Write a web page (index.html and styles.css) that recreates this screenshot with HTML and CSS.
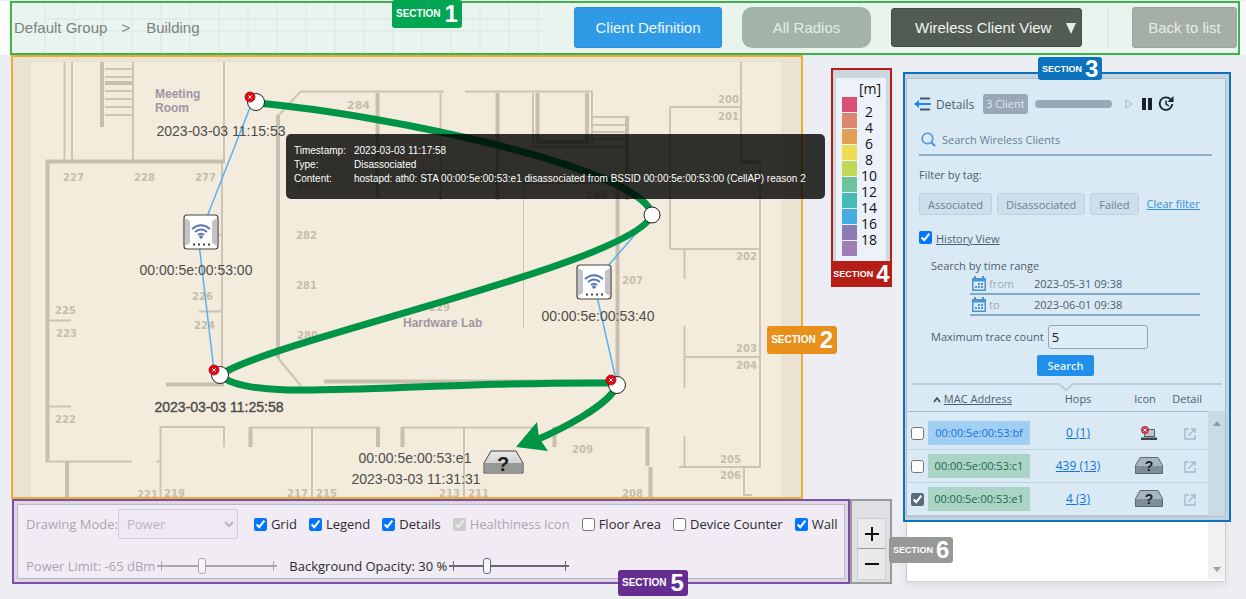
FILE: index.html
```
<!DOCTYPE html>
<html lang="en">
<head>
  <meta charset="UTF-8">
  <meta name="viewport" content="width=device-width, initial-scale=1.0">
  <title>Wireless Client View</title>
  <link rel="stylesheet" href="styles.css">
</head>
<body>
  <header class="topbar">
    <span class="tag tag-1">SECTION <b>1</b></span>
    <nav class="breadcrumb">
      <a href="#">Default Group</a>
      <span>&gt;</span>
      <a href="#">Building</a>
    </nav>
    <div class="top-actions">
      <button class="btn btn-primary">Client Definition</button>
      <button class="btn btn-radios">All Radios</button>
      <div class="view-picker">
        <select aria-label="View">
          <option>Wireless Client View</option>
        </select>
      </div>
      <button class="btn btn-back">Back to list</button>
    </div>
  </header>

  <main class="workspace">
    <div class="left">
      <div class="map-row">
        <section class="map">
          <svg class="floor" viewBox="13 57 788 440">
            <defs>
              <g id="ap">
                <rect x="-17" y="-17" width="34" height="34" rx="3" fill="#fff" stroke="#444" stroke-width="1.2"/>
                <path d="M-16 -14l5 3v22l-5 3zM16 -14l-5 3v22l5 3z" fill="#c4c4c6"/>
                <g fill="none" stroke="#5577b8" stroke-width="2">
                  <path d="M-9 -3q9 -7.500 18 0"/>
                  <path d="M-6 0q6 -5 12 0"/>
                  <path d="M-3 3q3 -2.500 6 0"/>
                </g>
                <circle cy="5" r="1.800" fill="#5577b8"/>
                <path d="M-8 12.500h2m3 0h2m3 0h2m3 0h2" stroke="#444" stroke-width="2"/>
              </g>
              <g id="error">
                <circle r="5" fill="#f5000f" stroke="#7c1515" stroke-width=".8"/>
                <path d="M-1.700 -1.700l3.400 3.400m0 -3.400l-3.400 3.400" stroke="#fff" stroke-width="1"/>
              </g>
              <linearGradient id="boxTop" x1="0" y1="0" x2="0" y2="1">
                <stop offset="0" stop-color="#e8e8e8"/>
                <stop offset="1" stop-color="#bfc1bf"/>
              </linearGradient>
            </defs>

            <path class="edge" d="M13 57h788v440h-20V62H31v435H13z"/>

            <g class="walls">
              <path d="M64.500 62v98M72 62v98M105 69h28M105 77h28M105 91h28M105 99h28M105 107h28M105 115h28M133 62v98M224 62v98M222 163v222M217 234.500h4M199 311.500h22M48 320.500h23M48 406.500h23M46 461.500h86M301 91l-23 25M278 358l23 28M301 91.500h143M440.500 93v107M465 91.500h127M533 93v54M592 91v56M532 147h93M592 117h35M592 125h35M592 132h35M592 139h35M523 183h95M741 62v100M670 107h71M670 107v142M760 162v305M670 249h90M684.500 250v29M684.500 326v62M684.500 357h76M684.500 436v31M679 467h82M744 467v28h8M160.500 498v-71H224v20M156 461.500h4M250 427.500h128M312 427v71M402 427.500h131M464 427v71M554 427.500h91"/>
              <path class="thin" d="M523.500 183v145"/>
              <path class="thick" d="M102 62v65M105 83h28M46 161.500h179M47.500 160v302M67 462v36M166 384.500h58M278 115v243M324 381.500h288M377.500 93v105M497.500 93v107M537.500 93v49H587V93M627 116v84M617.500 183v198M741 162h19M250.500 427v20M378 427v20M402.500 427v20M533 427v20M554.500 427v20M647.500 427v39M650.500 467v31"/>
            </g>

            <g class="rooms">
              <text x="63" y="181">227</text>
              <text x="134" y="181">228</text>
              <text x="195" y="181">277</text>
              <text x="347" y="109" class="big">284</text>
              <text x="296" y="187">283</text>
              <text x="296" y="239">282</text>
              <text x="296" y="289">281</text>
              <text x="297" y="339">280</text>
              <text x="416" y="178">230</text>
              <text x="444" y="178">232</text>
              <text x="585" y="199" class="big">285</text>
              <text x="192" y="300">226</text>
              <text x="194" y="329">224</text>
              <text x="55" y="314">225</text>
              <text x="56" y="337">223</text>
              <text x="55" y="423">222</text>
              <text x="137" y="498">221</text>
              <text x="164" y="497">219</text>
              <text x="287" y="497">217</text>
              <text x="316" y="497">215</text>
              <text x="439" y="497">213</text>
              <text x="468" y="497">211</text>
              <text x="572" y="453">209</text>
              <text x="622" y="497">208</text>
              <text x="622" y="284">207</text>
              <text x="429" y="311">229</text>
              <text x="718" y="103">200</text>
              <text x="718" y="120">201</text>
              <text x="736" y="260">202</text>
              <text x="736" y="352">203</text>
              <text x="736" y="369">204</text>
              <text x="720" y="463">205</text>
              <text x="720" y="479">206</text>
            </g>

            <g class="places">
              <text x="155" y="98">Meeting</text>
              <text x="155" y="112">Room</text>
              <text x="403" y="327">Hardware Lab</text>
            </g>

            <path class="link" d="M251 105L201 232M198 235l16 136M652 215l-58 67M594 283l22 97"/>

            <g class="trace">
              <path d="M257 103C390 115 640 168 652 214"/>
              <path d="M652 214C640 262 270 340 220 375"/>
              <path d="M220 375C250 405 400 381 617 383"/>
              <path d="M617 385C610 405 560 430 534 441"/>
            </g>
            <path d="M516 447l21 -25 2 16 9 13z" fill="#009447"/>

            <g class="stops">
              <circle cx="256" cy="102" r="8.500"/>
              <circle cx="652" cy="215" r="8"/>
              <circle cx="220" cy="375" r="8.500"/>
              <circle cx="617" cy="385" r="8.500"/>
            </g>
            <use href="#error" x="250" y="97"/>
            <use href="#error" x="214" y="370"/>
            <use href="#error" x="611" y="380"/>
            <use href="#ap" x="201" y="232"/>
            <use href="#ap" x="594" y="282"/>

            <!-- unknown client -->
            <path d="M491 451h25l7 12v10h-39v-10z" fill="url(#boxTop)" stroke="#444"/>
            <path d="M485 463h37v10h-37z" fill="#969896"/>
            <text class="unknown" x="503" y="471">?</text>

            <g class="labels">
              <text x="221" y="136">2023-03-03 11:15:53</text>
              <text x="196" y="275">00:00:5e:00:53:00</text>
              <text x="598" y="321">00:00:5e:00:53:40</text>
              <text x="219" y="412" class="current">2023-03-03 11:25:58</text>
              <text x="415" y="463">00:00:5e:00:53:e1</text>
              <text x="416" y="484">2023-03-03 11:31:31</text>
            </g>
          </svg>

          <dl class="tooltip">
            <dt>Timestamp:</dt><dd>2023-03-03 11:17:58</dd>
            <dt>Type:</dt><dd>Disassociated</dd>
            <dt>Content:</dt><dd>hostapd: ath0: STA 00:00:5e:00:53:e1 disassociated from BSSID 00:00:5e:00:53:00 (CellAP) reason 2</dd>
          </dl>
          <span class="tag tag-2">SECTION <b>2</b></span>
        </section>

        <section class="legend">
          <div class="legend-inner">
            <div class="unit">[m]</div>
            <div class="scale">
              <div class="swatches">
                <i class="c1"></i><i class="c2"></i><i class="c3"></i><i class="c4"></i><i class="c5"></i>
                <i class="c6"></i><i class="c7"></i><i class="c8"></i><i class="c9"></i><i class="c10"></i>
              </div>
              <div class="marks">
                <span>2</span><span>4</span><span>6</span><span>8</span><span>10</span>
                <span>12</span><span>14</span><span>16</span><span>18</span>
              </div>
            </div>
          </div>
          <span class="tag tag-4">SECTION <b>4</b></span>
        </section>
      </div>

      <div class="tools-row">
        <section class="toolbar">
          <div class="toolbar-inner">
            <div class="tool-line">
              <div class="mode">
                <label class="off" for="mode">Drawing Mode:</label>
                <div class="mode-select">
                  <select id="mode" disabled><option>Power</option></select>
                  <svg width="10" height="7" viewBox="0 0 10 7"><path d="M1 1l4 4 4-4" fill="none" stroke="#b9b5bd" stroke-width="2"/></svg>
                </div>
              </div>
              <div class="checks">
                <label><input type="checkbox" checked>Grid</label>
                <label><input type="checkbox" checked>Legend</label>
                <label><input type="checkbox" checked>Details</label>
                <label class="off"><input type="checkbox" checked disabled>Healthiness Icon</label>
                <label><input type="checkbox">Floor Area</label>
                <label><input type="checkbox">Device Counter</label>
                <label><input type="checkbox" checked>Wall</label>
              </div>
            </div>
            <div class="tool-line sliders">
              <label class="off">Power Limit: -65 dBm <input type="range" value="36" disabled></label>
              <label>Background Opacity: 30 % <input type="range" value="30"></label>
            </div>
          </div>
          <span class="tag tag-5">SECTION <b>5</b></span>
        </section>
        <section class="zoom">
          <div class="zoom-buttons">
            <button aria-label="Zoom in"><svg width="14" height="14" viewBox="0 0 14 14"><path d="M7 0v14M0 7h14" stroke="#111" stroke-width="2"/></svg></button>
            <button aria-label="Zoom out"><svg width="14" height="14" viewBox="0 0 14 14"><path d="M0 7h14" stroke="#111" stroke-width="2"/></svg></button>
          </div>
          <span class="tag tag-6">SECTION <b>6</b></span>
        </section>
      </div>
    </div>

    <aside class="side">
      <section class="clients">
        <span class="tag tag-3">SECTION <b>3</b></span>
        <div class="clients-inner">
          <div class="details-head">
            <svg width="17" height="14" viewBox="0 0 17 14"><path d="M6 1.500h10M6 12.500h10" stroke="#44586b" stroke-width="2"/><path d="M4 7h13" stroke="#1a86f0" stroke-width="2"/><path d="M0 7l5-4v8z" fill="#1a86f0"/></svg>
            <span class="details-title">Details</span>
            <span class="count">3 Client</span>
            <span class="progress"></span>
            <svg class="play" width="8" height="10" viewBox="0 0 8 10"><path d="M1 1l6 4-6 4z" fill="none" stroke="#a9b9c6"/></svg>
            <svg class="pause" width="10" height="12" viewBox="0 0 10 12"><path d="M0 0h4v12H0zM6 0h4v12H6z" fill="#16232e"/></svg>
            <svg width="16" height="16" viewBox="0 0 16 16"><path d="M12.500 3.200A6.300 6.300 0 1 0 14.300 8" fill="none" stroke="#16232e" stroke-width="1.800"/><path d="M15.500 0v6h-6z" fill="#16232e"/><path d="M8 4.500V8l3 2" fill="none" stroke="#16232e" stroke-width="1.500"/></svg>
          </div>

          <label class="search">
            <svg width="15" height="15" viewBox="0 0 15 15"><circle cx="6.500" cy="6.500" r="5.300" fill="none" stroke="#4a97d8" stroke-width="1.600"/><path d="M10.500 10.500l3.500 3.500" stroke="#4a97d8" stroke-width="2.200"/></svg>
            <input type="text" placeholder="Search Wireless Clients" aria-label="Search Wireless Clients">
          </label>

          <div class="filter">
            <div>Filter by tag:</div>
            <div class="filter-buttons">
              <button>Associated</button>
              <button>Disassociated</button>
              <button>Failed</button>
              <a href="#">Clear filter</a>
            </div>
          </div>

          <label class="history"><input type="checkbox" checked><span>History View</span></label>

          <div class="range">
            <div>Search by time range</div>
            <label class="date">
              <svg width="14" height="15" viewBox="0 0 14 15"><path d="M0 2h14v13H0z" fill="#4a94d4"/><path d="M3 0v3M11 0v3" stroke="#4a94d4" stroke-width="2"/><path d="M1.500 5.500h11v8h-11z" fill="#dbebf6"/><path d="M6 8h2m1 0h2M3 11h2m1 0h2m1 0h2" stroke="#4a94d4" stroke-width="2"/></svg>
              <span>from</span><input type="text" value="2023-05-31 09:38">
            </label>
            <label class="date">
              <svg width="14" height="15" viewBox="0 0 14 15"><path d="M0 2h14v13H0z" fill="#4a94d4"/><path d="M3 0v3M11 0v3" stroke="#4a94d4" stroke-width="2"/><path d="M1.500 5.500h11v8h-11z" fill="#dbebf6"/><path d="M6 8h2m1 0h2M3 11h2m1 0h2m1 0h2" stroke="#4a94d4" stroke-width="2"/></svg>
              <span>to</span><input type="text" value="2023-06-01 09:38">
            </label>
            <label class="trace-count">Maximum trace count <input type="text" value="5"></label>
          </div>
          <button class="search-btn">Search</button>

          <svg class="notch" viewBox="0 0 310 8"><path d="M0 1h147l7 6 7-6h149" fill="none" stroke="#b4c5d2" stroke-width="1.500"/></svg>

          <div class="table-wrap">
            <table>
              <colgroup>
                <col class="col-check">
                <col class="col-mac">
                <col class="col-hops">
                <col class="col-icon">
                <col>
              </colgroup>
              <thead>
                <tr>
                  <th colspan="2"><svg width="8" height="6" viewBox="0 0 8 6"><path d="M1 5l3-4 3 4" fill="none" stroke="#37474f" stroke-width="1.500"/></svg> <a href="#">MAC Address</a></th>
                  <th>Hops</th>
                  <th>Icon</th>
                  <th class="detail">Detail</th>
                </tr>
              </thead>
              <tbody>
                <tr>
                  <td><input type="checkbox" aria-label="00:00:5e:00:53:bf"></td>
                  <td><span class="mac blue">00:00:5e:00:53:bf</span></td>
                  <td><a href="#">0 (1)</a></td>
                  <td class="device"><svg width="18" height="15" viewBox="0 0 18 15"><path d="M4.500 3.500h10v7h-10z" fill="#b9c4cc" stroke="#555e66"/><path d="M1 11.500h16v2.500H1z" fill="#3d434a"/><circle cx="5" cy="4" r="4" fill="#c9394c"/><path d="M3.500 2.500l3 3m0-3l-3 3" stroke="#fff"/></svg></td>
                  <td><a class="open" href="#" aria-label="Open"><svg width="12" height="12" viewBox="0 0 12 12"><path d="M5 1H1v10h10V7M7 1h4v4M11 1L4.500 7.500" fill="none" stroke="#a6b9c8" stroke-width="1.400"/></svg></a></td>
                </tr>
                <tr>
                  <td><input type="checkbox" aria-label="00:00:5e:00:53:c1"></td>
                  <td><span class="mac green">00:00:5e:00:53:c1</span></td>
                  <td><a href="#">439 (13)</a></td>
                  <td class="device"><svg width="28" height="17" viewBox="0 0 28 17"><path d="M5 .5h18l4.500 8v8H.5v-8z" fill="#a9b5be" stroke="#5d6870"/><path d="M1 9h26v7H1z" fill="#7f8d97"/><text class="unknown-sm" x="14" y="14">?</text></svg></td>
                  <td><a class="open" href="#" aria-label="Open"><svg width="12" height="12" viewBox="0 0 12 12"><path d="M5 1H1v10h10V7M7 1h4v4M11 1L4.500 7.500" fill="none" stroke="#a6b9c8" stroke-width="1.400"/></svg></a></td>
                </tr>
                <tr>
                  <td><input type="checkbox" checked aria-label="00:00:5e:00:53:e1"></td>
                  <td><span class="mac green">00:00:5e:00:53:e1</span></td>
                  <td><a href="#">4 (3)</a></td>
                  <td class="device"><svg width="28" height="17" viewBox="0 0 28 17"><path d="M5 .5h18l4.500 8v8H.5v-8z" fill="#a9b5be" stroke="#5d6870"/><path d="M1 9h26v7H1z" fill="#7f8d97"/><text class="unknown-sm" x="14" y="14">?</text></svg></td>
                  <td><a class="open" href="#" aria-label="Open"><svg width="12" height="12" viewBox="0 0 12 12"><path d="M5 1H1v10h10V7M7 1h4v4M11 1L4.500 7.500" fill="none" stroke="#a6b9c8" stroke-width="1.400"/></svg></a></td>
                </tr>
              </tbody>
            </table>
            <div class="scroll-top"><svg width="8" height="5" viewBox="0 0 8 5"><path d="M0 5l4-5 4 5z" fill="#8d9ba6"/></svg></div>
          </div>
        </div>
      </section>
      <div class="clients-rest">
        <div class="scroll-bottom"><svg width="8" height="5" viewBox="0 0 8 5"><path d="M0 0l4 5 4-5z" fill="#a0a0a0"/></svg></div>
      </div>
    </aside>
  </main>
</body>
</html>
```
FILE: styles.css
```
* {
  box-sizing: border-box;
}

body {
  margin: 0;
  background: #edeef3;
  font-family: "Open Sans", "Noto Sans", sans-serif;
  font-size: 12px;
  color: #333;
}

button, select, input {
  font-family: inherit;
}

input[type="checkbox"] {
  width: 13px;
  height: 13px;
  margin: 0;
}

/* Section tags */
.tag {
  position: absolute;
  z-index: 5;
  display: flex;
  align-items: center;
  justify-content: center;
  gap: 4px;
  height: 26px;
  padding: 0 4px;
  border-radius: 3px;
  color: #fff;
  font: bold 10px/26px "Liberation Sans", sans-serif;
}

.tag b {
  font-size: 24px;
}

.tag-1 {
  top: -3px;
  left: 380px;
  height: 28px;
  background: #00a651;
}

.tag-2 {
  top: 269px;
  right: -36px;
  height: 28px;
  background: #e8901c;
}

.tag-3 {
  top: -17px;
  left: 133px;
  height: 23px;
  gap: 3px;
  font-size: 9px;
  background: #0b72be;
}

.tag-4 {
  bottom: -2px;
  left: -2px;
  right: -2px;
  padding: 0 2px;
  gap: 3px;
  font-size: 9px;
  background: #b51d17;
}

.tag-5 {
  bottom: -14px;
  left: 604px;
  background: #662d91;
}

.tag-6 {
  top: 36px;
  left: 37px;
  gap: 3px;
  font-size: 9px;
  background: #979997;
}

/* Top bar */
.topbar {
  position: relative;
  display: flex;
  align-items: center;
  justify-content: space-between;
  height: 54px;
  margin: 1px 6px 0 10px;
  padding: 0 1px 2px 2px;
  border: 2px solid #3bb54a;
  background:
    linear-gradient(#e2ece6, #e2ece6) 32px 15px / 500px 2px no-repeat,
    linear-gradient(#e2ece6, #e2ece6) 32px 27px / 500px 2px no-repeat,
    repeating-linear-gradient(90deg, #e3ede7 0 2px, transparent 2px 29px) 32px 0 / 500px 100% no-repeat,
    #e9f4ee;
  box-shadow: -10px 0 0 #fcfcfd, 6px 0 0 #f7f8fa;
}

.breadcrumb {
  display: flex;
  gap: 14px;
  font: 15px "Liberation Sans", sans-serif;
  color: #7b837e;
}

.breadcrumb a {
  color: inherit;
  text-decoration: none;
}

.breadcrumb span {
  padding-right: 2px;
}

.top-actions {
  display: flex;
  align-items: center;
  gap: 20px;
}

.btn {
  height: 41px;
  padding: 0;
  border: 1px solid transparent;
  border-radius: 3px;
  font: 15px "Liberation Sans", sans-serif;
}

.btn-primary {
  width: 148px;
  background: #2f9be6;
  border-color: #2690dc;
  color: #edf7fd;
}

.btn-radios {
  width: 129px;
  background: #a2b4a9;
  border-radius: 10px;
  color: #e1eee6;
}

.view-picker {
  position: relative;
  padding-right: 25px;
  border-right: 2px solid #dfe9e3;
}

.view-picker select {
  appearance: none;
  display: block;
  width: 191px;
  height: 39px;
  padding: 0 23px;
  border: 1px solid #454d46;
  border-radius: 3px;
  background: #535c53;
  color: #eef6f0;
  font: 15px "Liberation Sans", sans-serif;
}

.view-picker::after {
  content: "";
  position: absolute;
  right: 31px;
  top: 15px;
  border: 5px solid transparent;
  border-top: 11px solid #e6eee8;
  border-bottom: 0;
}

.btn-back {
  width: 105px;
  margin-left: 3px;
  background: #a5afa7;
  border-color: #9ba59d;
  color: #e4eee7;
}

/* Layout */
.workspace {
  display: grid;
  grid-template-columns: minmax(0, 1fr) 328px;
  gap: 11px;
  padding: 0 15px 14px 11px;
}

.map-row {
  display: flex;
  align-items: flex-start;
  gap: 28px;
}

.tools-row {
  display: flex;
  margin-left: 1px;
}

/* Map */
.map {
  position: relative;
  flex: 1;
  border: 2px solid #edac38;
  background: #f3ebdc;
}

.floor {
  display: block;
  width: 100%;
}

.edge {
  fill: #eae3d4;
}

.walls {
  fill: none;
  stroke: #cdc4b4;
  stroke-width: 2;
}

.walls .thin {
  stroke-width: 1;
}

.walls .thick {
  stroke: #c8bfaf;
  stroke-width: 4;
}

.rooms {
  fill: #c6bdad;
  font: bold 10px "DejaVu Sans", sans-serif;
}

.rooms .big {
  font-size: 11px;
}

.places {
  fill: #a096a3;
  font: bold 12px "Liberation Sans", sans-serif;
}

.link {
  stroke: #58b1f2;
  stroke-width: 1.5;
}

.trace {
  fill: none;
  stroke: #009447;
  stroke-width: 7;
}

.stops {
  fill: #fff;
  stroke: #222;
}

.labels {
  fill: #4d4d4d;
  font: 14px "Liberation Sans", sans-serif;
  text-anchor: middle;
}

.labels .current {
  stroke: #4d4d4d;
  stroke-width: .4;
}

.unknown {
  fill: #1d1d1d;
  font: bold 20px "Liberation Sans", sans-serif;
  text-anchor: middle;
}

.tooltip {
  position: absolute;
  left: 273px;
  top: 77px;
  z-index: 4;
  display: grid;
  grid-template-columns: 60px auto;
  margin: 0;
  padding: 10px 19px 13px 8px;
  border-radius: 5px;
  background: rgba(0, 0, 0, 0.8);
  color: #fff;
  font: 10px/14px "Liberation Sans", sans-serif;
  white-space: nowrap;
}

.tooltip dd {
  margin: 0;
}

/* Legend */
.legend {
  position: relative;
  width: 61px;
  margin-top: 13px;
  padding: 8px 4px 23px 3px;
  border: 2px solid #b51d17;
  background: #cbd6de;
}

.legend-inner {
  padding: 3px 5px 5px 6px;
  background: #ebf2fa;
  color: #111;
  font-size: 14px;
  line-height: 16px;
}

.unit {
  text-align: right;
}

.scale {
  display: flex;
}

.swatches i {
  display: block;
  width: 15px;
  height: 15px;
  margin-bottom: 1px;
}

.c1 { background: #dd5075; }
.c2 { background: #dc866f; }
.c3 { background: #e29f55; }
.c4 { background: #edda55; }
.c5 { background: #bfd855; }
.c6 { background: #70c29c; }
.c7 { background: #46bab5; }
.c8 { background: #46ade1; }
.c9 { background: #8b7bb5; }
.c10 { background: #a07db5; }

.marks {
  flex: 1;
  padding-top: 7px;
  text-align: center;
}

.marks span {
  display: block;
}

/* Toolbar */
.toolbar {
  position: relative;
  flex: 1;
  padding: 3px;
  border: 2px solid #7f4fa3;
  background: #dcd6e5;
}

.toolbar-inner {
  height: 100%;
  padding: 4px 4px 1px 8px;
  border: 1px solid #bfb6ca;
  background: #f1ecf4;
  color: #2c2a30;
  font-size: 13px;
  white-space: nowrap;
}

.tool-line {
  display: flex;
  align-items: center;
  height: 30px;
}

.mode {
  display: flex;
  align-items: center;
}

.mode-select {
  position: relative;
}

.mode-select select {
  appearance: none;
  display: block;
  width: 120px;
  height: 30px;
  padding: 0 8px;
  border: 1px solid #d2ccd8;
  border-radius: 2px;
  background: #efe9f4;
  color: #b9b5bd;
  font-size: 13px;
  opacity: 1;
}

.mode-select svg {
  position: absolute;
  right: 4px;
  top: 12px;
}

.checks {
  display: flex;
  gap: 12px;
  margin-left: 16px;
}

.checks label {
  display: flex;
  align-items: center;
  gap: 4px;
}

.off {
  color: #aaa6ae;
}

.sliders {
  gap: 12px;
  height: 22px;
  margin-top: 16px;
}

.sliders label {
  display: flex;
  align-items: center;
  gap: 2px;
}

input[type="range"] {
  appearance: none;
  width: 120px;
  height: 16px;
  margin: 0;
  color: #66667f;
  background:
    linear-gradient(currentColor, currentColor) 0 50% / 100% 2px no-repeat,
    linear-gradient(currentColor, currentColor) 4px 50% / 1px 10px no-repeat,
    linear-gradient(currentColor, currentColor) 116px 50% / 1px 10px no-repeat;
}

input[type="range"]:disabled {
  color: #aaa6ae;
}

input[type="range"]::-webkit-slider-thumb {
  appearance: none;
  width: 8px;
  height: 16px;
  border: 1px solid currentColor;
  border-radius: 3px;
  background: #f8f5fa;
}

/* Zoom buttons */
.zoom {
  position: relative;
  width: 42px;
  padding: 17px 4px 2px 5px;
  border: 2px solid #999b98;
  background: #dfe0e4;
}

.zoom-buttons {
  border: 1px solid #cdcdcf;
  background: #e9e9ea;
}

.zoom-buttons button {
  display: flex;
  align-items: center;
  justify-content: center;
  width: 100%;
  height: 30px;
  padding: 0;
  border: 0;
  background: none;
}

.zoom-buttons button:first-child {
  border-bottom: 1px solid #999;
}

/* Client panel */
.side {
  padding-top: 17px;
}

.clients {
  position: relative;
  padding: 4px 3px 3px 1px;
  border: 2px solid #0b72be;
  background: #c3d3e0;
}

.clients-inner {
  border: 1px solid #b1bfcb;
  background: #daeaf5;
  color: #4d6070;
  font-size: 11px;
}

.details-head {
  display: flex;
  align-items: center;
  height: 20px;
  margin: 15px 0 0 7px;
}

.details-title {
  margin: 0 9px 0 5px;
  font-size: 12px;
}

.count {
  padding: 0 3px;
  border-radius: 3px;
  background: #99a8b4;
  color: #dce7ef;
  line-height: 20px;
  font-size: 11px;
}

.progress {
  width: 77px;
  height: 8px;
  margin-left: 7px;
  border-radius: 4px;
  background: #9aa8b5;
}

.play {
  margin-left: 13px;
}

.pause {
  margin: 0 6px 0 9px;
}

.search {
  display: flex;
  align-items: center;
  gap: 6px;
  height: 32px;
  margin: 10px 13px 0 12px;
  padding-left: 2px;
  border-bottom: 2px solid #8fb0c8;
}

.search input {
  flex: 1;
  padding: 0;
  border: 0;
  background: none;
  font-size: 11px;
}

.search input::placeholder {
  color: #6b7f90;
}

.filter {
  margin: 11px 12px 0;
  line-height: 16px;
}

.filter-buttons {
  display: flex;
  align-items: center;
  gap: 5px;
  margin-top: 10px;
}

.filter button {
  height: 22px;
  padding: 0 8px;
  border: 1px solid #c0cfdb;
  border-radius: 3px;
  background: #cedeea;
  color: #6d8090;
  font-size: 11px;
}

.filter a {
  margin-left: 3px;
  color: #2f8fd8;
}

.history {
  display: flex;
  gap: 4px;
  align-items: flex-start;
  margin: 16px 12px 0;
  line-height: 16px;
  text-decoration: underline;
}

.range {
  margin: 11px 0 0 24px;
  line-height: 16px;
}

.date {
  display: flex;
  align-items: center;
  gap: 3px;
  width: 230px;
  height: 21px;
  margin-left: 39px;
  padding-left: 2px;
  border-bottom: 2px solid #86a9c8;
}

.date span {
  width: 42px;
  color: #9aabb9;
}

.date input {
  flex: 1;
  min-width: 0;
  padding: 0;
  border: 0;
  background: none;
  color: #4d6070;
  font-size: 11px;
}

.trace-count {
  display: flex;
  align-items: center;
  gap: 4px;
  margin-top: 9px;
}

.trace-count input {
  width: 100px;
  height: 24px;
  padding: 0 3px;
  border: 1px solid #94a5b3;
  border-radius: 3px;
  background: #ddecf6;
  color: #222;
  font-size: 13px;
}

.search-btn {
  display: block;
  width: 57px;
  height: 21px;
  margin: 6px 0 0 130px;
  padding: 0;
  border: 0;
  border-radius: 2px;
  background: #1f8fea;
  color: #e5f2fc;
  font-size: 11px;
  font-weight: 600;
}

.notch {
  display: block;
  width: 310px;
  height: 8px;
  margin: 7px 0 -4px 5px;
}

.table-wrap {
  display: flex;
}

table {
  flex: 1;
  width: 100%;
  table-layout: fixed;
  border-collapse: collapse;
}

.col-check {
  width: 21px;
}

.col-mac {
  width: 110px;
}

.col-hops {
  width: 80px;
}

.col-icon {
  width: 54px;
}

th {
  height: 24px;
  padding: 0;
  border-bottom: 1px solid #a9bccb;
  font-weight: 400;
  line-height: 16px;
}

th a {
  color: inherit;
}

th.detail {
  padding-right: 6px;
  text-align: right;
}

td {
  height: 33px;
  padding: 0;
  border-bottom: 1px solid #c0d2e0;
  text-align: center;
  vertical-align: middle;
}

tbody tr:first-child td {
  height: 38px;
  padding-top: 5px;
}

td a {
  color: #0d75e0;
  font-size: 12px;
}

td svg {
  display: inline-block;
  vertical-align: middle;
}

td.device {
  padding-left: 8px;
}

td input {
  vertical-align: middle;
  accent-color: #5a6b7a;
}

.mac {
  display: block;
  width: 102px;
  line-height: 24px;
  font-size: 11px;
  text-align: center;
}

.mac.blue {
  background: #a0cff3;
  color: #1672e0;
}

.mac.green {
  background: #a9d4c6;
  color: #20694a;
}

.unknown-sm {
  fill: #17222b;
  font: bold 14px "Liberation Sans", sans-serif;
  text-anchor: middle;
}

.scroll-top {
  flex: none;
  width: 17px;
  margin-top: 24px;
  padding-top: 3px;
  background: #cbdbe6;
  text-align: center;
}

.clients-rest {
  display: flex;
  justify-content: flex-end;
  height: 60px;
  margin: 0 5px 0 3px;
  padding-bottom: 2px;
  border: 1px solid #cfcfd2;
  border-top: 0;
  background: #fff;
  box-shadow: 0 3px 8px rgba(0, 0, 0, 0.08);
}

.scroll-bottom {
  display: flex;
  align-items: flex-end;
  justify-content: center;
  width: 17px;
  padding-bottom: 7px;
  background: #f1f1f1;
}
```
